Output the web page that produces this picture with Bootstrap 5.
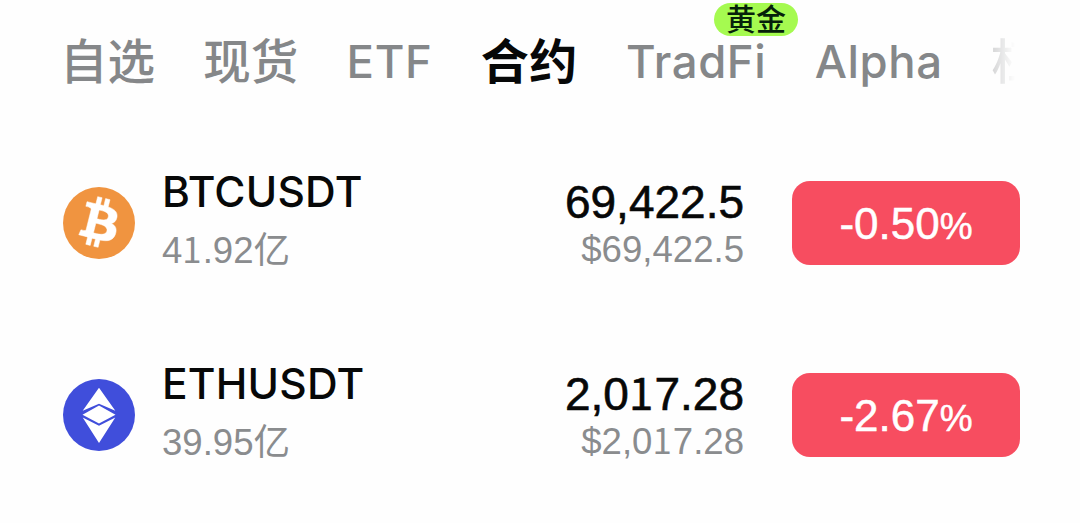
<!DOCTYPE html>
<html lang="zh-CN">
  <head>
    <meta charset="UTF-8" />
    <meta name="viewport" content="width=device-width, initial-scale=1.0" />
    <title>合约行情</title>
    <link
      href="https://cdn.jsdelivr.net/npm/bootstrap@5.3.0/dist/css/bootstrap.min.css"
      rel="stylesheet"
    />
    <style>
      body {
        font-family: Inter, "Noto Sans CJK SC", sans-serif;
        color: #070808;
        background-color: #fefefe;
        overflow: hidden;
      }
      .market-tabs {
        height: 123px;
        margin-bottom: 4px;
        padding-left: 60px;
        gap: 48.3px;
      }
      .market-tabs .nav-link {
        color: #858789;
        font-size: 45.5px;
        font-weight: 500;
        line-height: 60px;
        letter-spacing: 0.6px;
        white-space: nowrap;
      }
      .market-tabs .zh {
        font-size: 47.5px;
        letter-spacing: 0;
      }
      .market-tabs .zh.active {
        color: #070808;
        font-size: 48px;
        font-weight: 700;
        letter-spacing: 0.5px;
      }
      .market-tabs .fade-tab {
        -webkit-mask-image: linear-gradient(90deg, rgba(0, 0, 0, 0.35), transparent 24px);
        mask-image: linear-gradient(90deg, rgba(0, 0, 0, 0.35), transparent 24px);
      }
      .hot-tag {
        top: -29px;
        left: 88px;
        width: 84px;
        height: 33px;
        font-size: 30px;
        letter-spacing: 0;
        line-height: 32px;
        color: #06210a;
        background-color: #a5fa50;
      }
      .pair-row {
        height: 192px;
        padding: 0 60px 0 63px;
      }
      .coin {
        width: 72px;
        height: 72px;
        margin-right: 27px;
      }
      .pair-name {
        font-size: 42.5px;
        font-weight: 500;
        line-height: 56px;
        letter-spacing: 0.2px;
      }
      .pair-volume {
        font-size: 36.6px;
        line-height: 62px;
        height: 62px;
        color: #8a8c8e;
      }
      .price-box {
        padding-bottom: 4px;
      }
      .num {
        font-family: "Liberation Sans", "Noto Sans CJK SC", sans-serif;
      }
      /* the figure one with a foot */
      .one {
        font-family: "Noto Sans CJK SC", sans-serif;
        font-size: 0.95em;
        line-height: 1;
        letter-spacing: 0.03em;
      }
      .price {
        font-size: 46px;
        line-height: 56px;
        -webkit-text-stroke: 0.6px currentColor;
      }
      .price-usd {
        font-size: 36.6px;
        line-height: 39px;
        color: #8a8c8e;
      }
      .change {
        width: 228px;
        height: 84px;
        margin-left: 48px;
        padding-top: 2px;
        border-radius: 18px;
        background-color: #f74d60;
        font-size: 44px;
        -webkit-text-stroke: 0.5px currentColor;
      }
      .change .pct {
        font-size: 37px;
      }
    </style>
  </head>
  <body>
    <nav class="nav market-tabs flex-nowrap align-items-center">
      <a class="nav-link p-0 zh" href="#">自选</a>
      <a class="nav-link p-0 zh" href="#">现货</a>
      <a class="nav-link p-0" href="#">ETF</a>
      <a class="nav-link p-0 zh active" href="#">合约</a>
      <a class="nav-link p-0 position-relative" href="#"
        >TradFi<span class="hot-tag position-absolute rounded-pill text-center">黄金</span></a
      >
      <a class="nav-link p-0" href="#">Alpha</a>
      <a class="nav-link p-0 zh fade-tab" href="#">杠</a>
    </nav>

    <main>
      <div class="pair-row d-flex align-items-center">
        <svg class="coin" viewBox="0 0 32 32">
          <circle cx="16" cy="16" r="16" fill="#f09440" />
          <path
            transform="translate(-2.2 -2.5) scale(1.13)"
            fill="#fff"
            stroke="#fff"
            stroke-width="0.2"
            d="M23.189 14.02c.314-2.096-1.283-3.223-3.465-3.975l.708-2.84-1.728-.43-.69 2.765c-.454-.114-.92-.22-1.385-.326l.695-2.783L15.596 6l-.708 2.839c-.376-.086-.746-.17-1.104-.26l.002-.009-2.384-.595-.46 1.846s1.283.294 1.256.312c.7.175.826.638.805 1.006l-.806 3.235c.048.012.11.03.18.057l-.183-.045-1.13 4.532c-.086.212-.303.531-.793.41.018.025-1.256-.313-1.256-.313l-.858 1.978 2.25.561c.418.105.828.215 1.231.318l-.715 2.872 1.727.43.708-2.84c.472.127.93.245 1.378.357l-.706 2.828 1.728.43.715-2.866c2.948.558 5.164.333 6.097-2.333.752-2.146-.037-3.385-1.588-4.192 1.13-.26 1.98-1.003 2.207-2.538zm-3.95 5.538c-.533 2.147-4.148.986-5.32.695l.95-3.805c1.172.293 4.929.872 4.37 3.11zm.535-5.569c-.487 1.953-3.495.96-4.47.717l.86-3.45c.975.243 4.118.696 3.61 2.733z"
          />
        </svg>
        <div>
          <div class="pair-name">BTCUSDT</div>
          <div class="pair-volume num">4<span class="one">1</span>.92亿</div>
        </div>
        <div class="price-box ms-auto text-end num">
          <div class="price">69,422.5</div>
          <div class="price-usd">$69,422.5</div>
        </div>
        <div class="change num text-white d-flex align-items-center justify-content-center">
          <div>-0.50<span class="pct">%</span></div>
        </div>
      </div>

      <div class="pair-row d-flex align-items-center">
        <svg class="coin" viewBox="0 0 72 72">
          <circle cx="36" cy="36" r="36" fill="#404edb" />
          <g fill="#fff">
            <path d="M36 8.7 52.3 31.8 36 24.7 19.7 31.8z" />
            <path d="M36 26.6 52.5 35.7 36 44.6 19.5 35.7z" />
            <path d="M19.7 38.6 36 46.8 52.3 38.6 36 64z" />
          </g>
        </svg>
        <div>
          <div class="pair-name">ETHUSDT</div>
          <div class="pair-volume num">39.95亿</div>
        </div>
        <div class="price-box ms-auto text-end num">
          <div class="price">2,0<span class="one">1</span>7.28</div>
          <div class="price-usd">$2,0<span class="one">1</span>7.28</div>
        </div>
        <div class="change num text-white d-flex align-items-center justify-content-center">
          <div>-2.67<span class="pct">%</span></div>
        </div>
      </div>
    </main>
    <script src="https://cdn.jsdelivr.net/npm/bootstrap@5.3.0/dist/js/bootstrap.bundle.min.js"></script>
  </body>
</html>
